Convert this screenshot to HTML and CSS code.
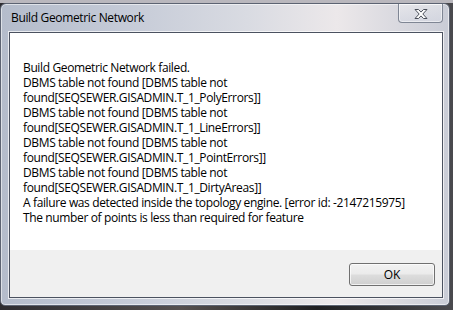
FILE: index.html
```html
<!DOCTYPE html>
<html>
<head>
<meta charset="utf-8">
<link rel="stylesheet" href="styles.css">
</head>
<body>
<div class="desk">
  <div class="window">
    <div class="titlebar">
      <span class="title">Build Geometric Network</span>
      <div class="close">
        <svg width="16" height="12" viewBox="0 0 16 12">
          <path d="M2 1.5 L5.5 1.5 L8 4.1 L10.5 1.5 L14 1.5 L9.8 6 L14 10.5 L10.5 10.5 L8 7.9 L5.5 10.5 L2 10.5 L6.2 6 Z" fill="#ffffff" stroke="#4a4f5a" stroke-width="1" stroke-linejoin="round"/>
        </svg>
      </div>
    </div>
    <div class="client">
      <div class="message">
        <div>Build Geometric Network failed.</div>
        <div>DBMS table not found [DBMS table not</div>
        <div>found[SEQSEWER.GISADMIN.T_1_PolyErrors]]</div>
        <div>DBMS table not found [DBMS table not</div>
        <div>found[SEQSEWER.GISADMIN.T_1_LineErrors]]</div>
        <div>DBMS table not found [DBMS table not</div>
        <div>found[SEQSEWER.GISADMIN.T_1_PointErrors]]</div>
        <div>DBMS table not found [DBMS table not</div>
        <div>found[SEQSEWER.GISADMIN.T_1_DirtyAreas]]</div>
        <div>A failure was detected inside the topology engine. [error id: -2147215975]</div>
        <div>The number of points is less than required for feature</div>
      </div>
      <div class="footer">
        <button class="ok">OK</button>
      </div>
    </div>
  </div>
</div>
</body>
</html>
```
FILE: styles.css
```css
html, body {
  margin: 0;
  padding: 0;
}
body {
  width: 453px;
  height: 310px;
  overflow: hidden;
  background: #2a2a2e;
  font-family: "Open Sans", "Noto Sans", sans-serif;
}
.desk {
  width: 453px;
  height: 310px;
  padding-top: 3px;
  box-sizing: border-box;
  background: linear-gradient(180deg, #b9b7bd 0px, #b9b7bd 3px, transparent 3px),
              linear-gradient(90deg, #2e2d31 0%, #55504f 40%, #1f1f22 70%, #4a4a4e 100%);
}
.window {
  width: 450px;
  height: 303px;
  box-sizing: border-box;
  border-radius: 6px 6px 5px 5px;
  border: 1px solid #5c6372;
  background: linear-gradient(90deg, #b4bccb 0%, #c3c9d6 25%, #d9dbe2 55%, #ece8ea 75%, #c9ccd6 100%);
  display: flex;
  flex-direction: column;
  box-shadow: inset 0 0 0 1px rgba(255,255,255,0.55);
}
.titlebar {
  height: 28px;
  display: flex;
  align-items: flex-start;
  justify-content: space-between;
  padding-left: 10px;
  padding-right: 6px;
}
.title {
  font-size: 12px;
  line-height: 16px;
  margin-top: 6px;
  color: #000;
  letter-spacing: -0.35px;
}
.close {
  width: 45px;
  height: 19px;
  box-sizing: border-box;
  border: 1px solid #7f8694;
  border-top: none;
  border-radius: 0 0 4px 4px;
  background: linear-gradient(180deg, rgba(255,255,255,0.35), rgba(215,218,228,0.6));
  box-shadow: inset 0 0 0 1px rgba(255,255,255,0.5);
  display: flex;
  align-items: center;
  justify-content: center;
}
.close svg {
  display: block;
  margin-top: 1px;
}
.client {
  margin: 0 6px 7px 8px;
  flex: 1;
  display: flex;
  flex-direction: column;
  border: 1px solid #4b5260;
  box-shadow: 0 0 0 1px rgba(255,255,255,0.7);
  background: #f0f0f0;
}
.message {
  background: #ffffff;
  height: 217px;
  box-sizing: border-box;
  padding: 27px 0 0 13px;
  font-size: 12px;
  line-height: 15px;
  color: #000;
  letter-spacing: -0.37px;
}
.footer {
  flex: 1;
  display: flex;
  justify-content: flex-end;
  align-items: flex-start;
  padding: 13px 7px 0 0;
}
.ok {
  width: 86px;
  height: 23px;
  border: 1px solid #707070;
  border-radius: 3px;
  background: linear-gradient(180deg, #f2f2f2 0%, #ebebeb 48%, #dddddd 52%, #cfcfcf 100%);
  box-shadow: inset 0 0 0 1px rgba(255,255,255,0.7);
  font-family: "Open Sans", "Noto Sans", sans-serif;
  font-size: 12px;
  color: #000;
  padding: 0;
}
```
